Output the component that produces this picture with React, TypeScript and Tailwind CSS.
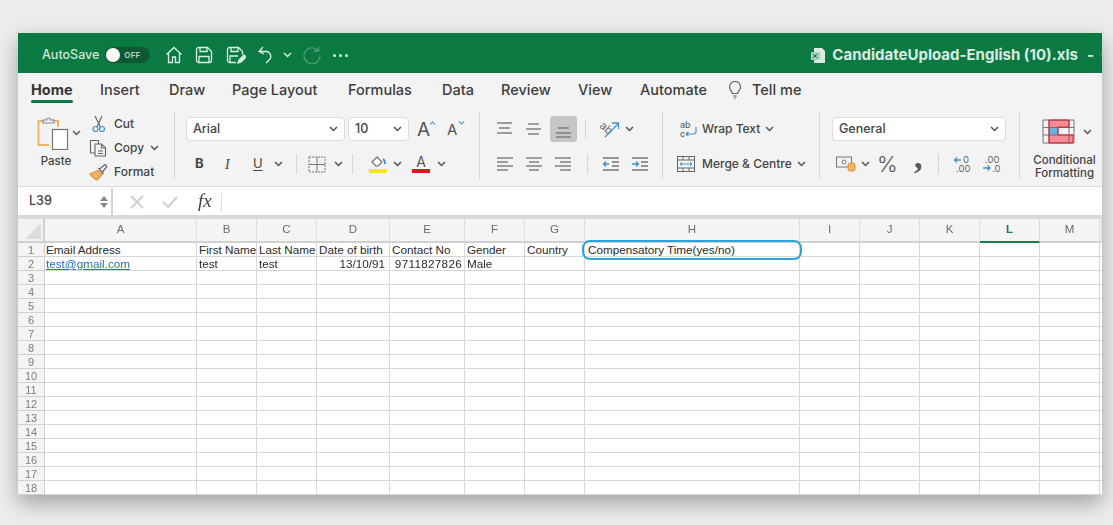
const columns = ['A', 'B', 'C', 'D', 'E', 'F', 'G', 'H', 'I', 'J', 'K', 'L', 'M', '']

const headerRow = ['Email Address', 'First Name', 'Last Name', 'Date of birth', 'Contact No', 'Gender', 'Country', 'Compensatory Time(yes/no)']
const tabs = [
  { label: 'Home', width: 'w-[69px]' },
  { label: 'Insert', width: 'w-[69px]' },
  { label: 'Draw', width: 'w-[63px]' },
  { label: 'Page Layout', width: 'w-[116px]' },
  { label: 'Formulas', width: 'w-[94px]' },
  { label: 'Data', width: 'w-[59px]' },
  { label: 'Review', width: 'w-[77px]' },
  { label: 'View', width: 'w-[62px]' },
  { label: 'Automate', width: 'w-[88px]' },
]

const gridCols = 'grid-cols-[27px_152px_60px_60px_73px_75px_60px_60px_215px_60px_60px_60px_60px_60px_2px]'

function Chevron({ className = '' }: { className?: string }) {
  return (
    <svg viewBox="0 0 9 6" className={`h-[6px] w-[9px] shrink-0 ${className}`} fill="none" stroke="#555" strokeWidth="1.5">
      <path d="M1 1l3.5 3.5L8 1" />
    </svg>
  )
}

function Sep({ className = '' }: { className?: string }) {
  return <div className={`h-[20px] w-px shrink-0 bg-[#d4d4d4] ${className}`} />
}

function Lines({ rows, className = '' }: { rows: [number, number, number][]; className?: string }) {
  return (
    <svg viewBox="0 0 18 16" className={`h-[16px] w-[18px] shrink-0 ${className}`} stroke="#777" strokeWidth="1.4">
      {rows.map(([x1, x2, y]) => (
        <line key={`${x1}-${y}`} x1={x1} x2={x2} y1={y} y2={y} />
      ))}
    </svg>
  )
}

function TopBarIcons() {
  return (
    <div className="ml-[15px] flex shrink-0 items-center">
      <svg viewBox="0 0 18 18" className="h-[18px] w-[18px]" fill="none" stroke="#d9efe2" strokeWidth="1.3">
        <path d="M1.500 8.500L9 1.500l7.500 7M3.500 7v9.500h4V11h3v5.500h4V7" />
      </svg>
      <svg viewBox="0 0 18 18" className="ml-[12px] h-[18px] w-[18px]" fill="none" stroke="#d9efe2" strokeWidth="1.3">
        <path d="M1.500 3.500a2 2 0 0 1 2-2h9l4 4v9a2 2 0 0 1-2 2h-11a2 2 0 0 1-2-2z" />
        <path d="M5 1.500v4h7v-4M4 16.500v-6h10v6" />
      </svg>
      <svg viewBox="0 0 20 18" className="ml-[13px] h-[18px] w-[20px]" fill="none" stroke="#d9efe2" strokeWidth="1.3">
        <path d="M10 16.500H3.500a2 2 0 0 1-2-2v-11a2 2 0 0 1 2-2h9l4 4v3" />
        <path d="M5 1.500v4h7v-4M4 16v-6h8" />
        <path d="M12 17l1-3 5-5 2 2-5 5z" fill="#d9efe2" />
      </svg>
      <svg viewBox="0 0 16 18" className="ml-[12px] h-[18px] w-[16px]" fill="none" stroke="#d9efe2" strokeWidth="1.3">
        <path d="M5 1L1 5.500 6 8M1.500 5.500h7.500a5 5 0 0 1 3 7.500l-4 4" />
      </svg>
      <Chevron className="ml-[9px] [&_path]:stroke-[#d9efe2]" />
      <svg viewBox="0 0 20 20" className="ml-[10px] h-[20px] w-[20px]" fill="none" stroke="#4d9f75" strokeWidth="1.3">
        <path d="M16 5.500A8 8 0 1 0 18 10M16.500 1.500v4.500H12" />
      </svg>
      <div className="ml-[11px] flex gap-[3px]">
        <span className="h-[3px] w-[3px] rounded-full bg-[#d9efe2]" />
        <span className="h-[3px] w-[3px] rounded-full bg-[#d9efe2]" />
        <span className="h-[3px] w-[3px] rounded-full bg-[#d9efe2]" />
      </div>
    </div>
  )
}

function TitleBar() {
  return (
    <div className="flex h-[40px] items-center overflow-hidden bg-[#0a7a42] pt-[4px]">
      <span className="ml-[24px] shrink-0 text-[12.5px] font-medium text-[#cfe6d8]">AutoSave</span>
      <div className="ml-[6px] flex h-[16px] w-[45px] shrink-0 items-center rounded-full bg-[#0c5a33] pl-px">
        <span className="h-[14px] w-[14px] rounded-full bg-white" />
        <span className="ml-[4px] text-[8px] font-semibold tracking-wide text-[#bcd9c8]">OFF</span>
      </div>
      <TopBarIcons />
      <svg viewBox="0 0 16 17" className="ml-[462px] h-[17px] w-[16px] shrink-0">
        <path d="M4 1h8l3 3v12H4z" fill="#dcebe2" />
        <rect x="1" y="5" width="9" height="8" fill="#a9cdb8" />
        <path d="M3 7l4 4M7 7l-4 4" stroke="#0a7a42" />
      </svg>
      <span className="ml-[6px] shrink-0 whitespace-nowrap text-[15px] font-bold text-[#dcebe2]">CandidateUpload-English (10).xls</span>
      <span className="ml-[9px] shrink-0 text-[15px] font-bold text-[#dcebe2]">-</span>
      <span className="ml-[7px] shrink-0 text-[15px] font-bold text-[#dcebe2]">C</span>
    </div>
  )
}

function Tabs() {
  return (
    <div className="flex h-[37px] items-center pb-[4px] pl-[13px] text-[14.5px] font-medium text-[#3d3d3d]">
      {tabs.map((tab) => (
        <div key={tab.label} className={`relative ${tab.width}`}>
          <span className={tab.label === 'Home' ? 'font-bold text-[#333]' : ''}>{tab.label}</span>
          {tab.label === 'Home' && <div className="absolute -bottom-[3px] left-0 h-[3px] w-[42px] rounded-full bg-[#0a7a42]" />}
        </div>
      ))}
      <svg viewBox="0 0 14 18" className="h-[18px] w-[14px]" fill="none" stroke="#666" strokeWidth="1.2">
        <path d="M4.500 12.500C4 10 1.500 9 1.500 6a5.500 5.500 0 0 1 11 0c0 3-2.500 4-3 6.500zM5 15h4M6 17h2" />
      </svg>
      <span className="ml-[10px]">Tell me</span>
    </div>
  )
}

function ClipboardGroup() {
  return (
    <div className="flex h-[68px] w-[157px] shrink-0 border-r border-[#d4d4d4] pl-[19px] pt-[5px]">
      <div className="w-[48px] shrink-0">
        <div className="flex items-center">
          <svg viewBox="0 0 32 34" className="h-[34px] w-[32px] shrink-0" fill="none">
            <path d="M7 5H1.500v24H12" stroke="#efb565" strokeWidth="2" />
            <path d="M16 5h5v6" stroke="#efb565" strokeWidth="2" />
            <path d="M6 7V4h3.500a2 2 0 0 1 4 0H17v3z" stroke="#888" strokeWidth="1.200" fill="#f3f3f3" />
            <rect x="15.500" y="13.500" width="15" height="20" fill="#fff" stroke="#777" strokeWidth="1.200" />
          </svg>
          <Chevron className="ml-[3px]" />
        </div>
        <div className="mt-[3px] w-[38px] text-center text-[11.5px] font-medium text-[#444]">Paste</div>
      </div>
      <div className="-mt-px ml-[6px] flex flex-col gap-[7px] text-[12px] font-medium text-[#444]">
        <div className="flex h-[17px] items-center">
          <svg viewBox="0 0 16 18" className="h-[18px] w-[16px]" fill="none" strokeWidth="1.200">
            <path d="M4 1l5.500 11M11 1L6 12" stroke="#666" />
            <circle cx="4.500" cy="14" r="2.500" stroke="#3f92cc" />
            <circle cx="11" cy="14" r="2.500" stroke="#3f92cc" />
          </svg>
          <span className="ml-[7px]">Cut</span>
        </div>
        <div className="flex h-[17px] items-center">
          <svg viewBox="0 0 20 18" className="-ml-[2px] h-[18px] w-[20px]" fill="none" stroke="#666" strokeWidth="1.100">
            <path d="M6 14H1.500V1.500h8V5" />
            <path d="M6 5h6.500l4 4v8H6z" />
            <path d="M12.500 5v4h4M9 12h5M9 14.500h5" />
          </svg>
          <span className="ml-[5px]">Copy</span>
          <Chevron className="ml-[6px]" />
        </div>
        <div className="flex h-[17px] items-center">
          <svg viewBox="0 0 20 18" className="-ml-[2px] h-[18px] w-[20px]" fill="none" strokeWidth="1.200">
            <path d="M1 11l8-3.500 4 4-5 5.500C5 16 3 14 1 11z" fill="#f2b36a" stroke="#e39338" />
            <path d="M10 6.500l6-5 2 2-5 6M9.500 5l5 6" stroke="#666" />
          </svg>
          <span className="ml-[5px]">Format</span>
        </div>
      </div>
    </div>
  )
}

function Select({ value, width, pad = 'pl-[6px]' }: { value: string; width: string; pad?: string }) {
  return (
    <div className={`flex h-[24px] shrink-0 items-center justify-between rounded-[4px] border border-[#dcdcdc] bg-white pr-[6px] text-[12.5px] font-medium text-[#444] ${width} ${pad}`}>
      <span>{value}</span>
      <Chevron />
    </div>
  )
}

function FontGroup() {
  return (
    <div className="flex h-[68px] w-[305px] shrink-0 flex-col border-r border-[#d4d4d4] pl-[11px] pt-[6px]">
      <div className="flex h-[24px] items-center">
        <Select value="Arial" width="w-[159px]" />
        <Select value="10" width="w-[61px]" pad="pl-[6px] ml-[3px]" />
        <span className="relative ml-[8px] w-[18px] text-[19px] leading-none text-[#555]">
          A
          <svg viewBox="0 0 7 4" className="absolute -right-[1px] top-[1px] h-[4px] w-[7px]" fill="none" stroke="#5aa5d8" strokeWidth="1.200">
            <path d="M1 3.500L3.500 1 6 3.500" />
          </svg>
        </span>
        <span className="relative ml-[12px] w-[18px] text-[15px] leading-none text-[#555]">
          A
          <svg viewBox="0 0 7 4" className="absolute right-0 -top-[1px] h-[4px] w-[7px]" fill="none" stroke="#5aa5d8" strokeWidth="1.200">
            <path d="M1 .5L3.500 3 6 .5" />
          </svg>
        </span>
      </div>
      <div className="mt-[11px] flex h-[24px] items-center text-[#444]">
        <span className="ml-[9px] w-[10px] text-[13px] font-bold">B</span>
        <span className="ml-[20px] w-[8px] font-['Liberation_Serif',serif] text-[14px] italic">I</span>
        <span className="ml-[20px] w-[12px] text-[13px] underline underline-offset-2">U</span>
        <Chevron className="ml-[9px]" />
        <Sep className="ml-[13px]" />
        <svg viewBox="0 0 18 17" className="ml-[11px] h-[17px] w-[18px]" fill="none" stroke="#777" strokeWidth="1">
          <rect x="1" y="1" width="16" height="15" strokeDasharray="2 1" />
          <path d="M9 1v15M1 8.500h16" />
        </svg>
        <Chevron className="ml-[8px]" />
        <Sep className="ml-[9px]" />
        <div className="ml-[16px] flex w-[18px] flex-col items-center">
          <svg viewBox="0 0 18 13" className="h-[13px] w-[18px]" fill="none" stroke="#666" strokeWidth="1.100">
            <path d="M3 7l5-5 5 5-4 4H7z" fill="#fff" />
            <path d="M14 4c2 1 2 3 2 5" stroke="#3f92cc" strokeWidth="1.800" />
          </svg>
          <div className="mt-[1px] h-[4px] w-[18px] bg-[#f5e61e]" />
        </div>
        <Chevron className="ml-[6px]" />
        <div className="ml-[10px] flex w-[18px] flex-col items-center">
          <span className="text-[14px] leading-[13px] text-[#555]">A</span>
          <div className="mt-[1px] h-[4px] w-[18px] bg-[#e0141c]" />
        </div>
        <Chevron className="ml-[7px]" />
      </div>
    </div>
  )
}

function AlignGroup() {
  return (
    <div className="flex h-[68px] w-[183px] shrink-0 flex-col border-r border-[#d4d4d4] pl-[16px] pt-[5px]">
      <div className="flex h-[26px] items-center">
        <Lines rows={[[1, 16, 2], [3, 14, 7], [1, 16, 12]]} />
        <Lines className="ml-[11px]" rows={[[3, 14, 3], [1, 16, 8], [3, 14, 13]]} />
        <div className="ml-[7px] flex h-[26px] w-[27px] items-end justify-center rounded-[3px] bg-[#c6c6c6] pb-[3px]">
          <Lines rows={[[3, 14, 5], [1, 16, 10], [1, 16, 14]]} />
        </div>
        <Sep className="ml-[8px]" />
        <svg viewBox="0 0 22 20" className="ml-[13px] h-[20px] w-[22px] overflow-visible" fill="none">
          <text x="1" y="11" fontSize="11" fill="#666" transform="rotate(40 5 8)">ab</text>
          <path d="M6 18L19 5M13 4h6.500v6" stroke="#3f92cc" strokeWidth="1.300" />
        </svg>
        <Chevron className="ml-[4px]" />
      </div>
      <div className="mt-[11px] flex h-[22px] items-center">
        <Lines rows={[[1, 17, 2], [1, 12, 6], [1, 17, 10], [1, 12, 14]]} />
        <Lines className="ml-[11px]" rows={[[1, 17, 2], [4, 14, 6], [1, 17, 10], [4, 14, 14]]} />
        <Lines className="ml-[11px]" rows={[[1, 17, 2], [6, 17, 6], [1, 17, 10], [6, 17, 14]]} />
        <Sep className="ml-[15px]" />
        <svg viewBox="0 0 18 16" className="ml-[14px] h-[16px] w-[18px]" fill="none" stroke="#777" strokeWidth="1.300">
          <path d="M1 2h16M10 6h7M10 10h7M1 14h16" />
          <path d="M7 8H1.500M4 5.500L1.500 8 4 10.500" stroke="#3f92cc" />
        </svg>
        <svg viewBox="0 0 18 16" className="ml-[11px] h-[16px] w-[18px]" fill="none" stroke="#777" strokeWidth="1.300">
          <path d="M1 2h16M10 6h7M10 10h7M1 14h16" />
          <path d="M1 8h6.500M5 5.500L7.500 8 5 10.500" stroke="#3f92cc" />
        </svg>
      </div>
    </div>
  )
}

function WrapGroup() {
  return (
    <div className="flex h-[68px] w-[157px] shrink-0 flex-col border-r border-[#d4d4d4] pl-[14px] pt-[6px] text-[12px] font-medium text-[#444]">
      <div className="flex h-[24px] items-center">
        <svg viewBox="0 0 18 18" className="ml-[3px] h-[18px] w-[18px]" fill="none">
          <text x="0" y="8" fontSize="9" fill="#666">ab</text>
          <text x="0" y="17" fontSize="9" fill="#666">c</text>
          <path d="M6 14h7a3 3 0 0 0 3-4V7M6 14l2.500-2M6 14l2.500 2" stroke="#3f92cc" strokeWidth="1.200" />
        </svg>
        <span className="ml-[4px]">Wrap Text</span>
        <Chevron className="ml-[5px]" />
      </div>
      <div className="mt-[11px] flex h-[24px] items-center">
        <svg viewBox="0 0 18 16" className="h-[16px] w-[18px]" fill="none" stroke="#666" strokeWidth="1">
          <rect x="0.500" y="0.500" width="17" height="15" />
          <path d="M0.500 4h17M0.500 12h17M6 0.500V4M12 0.500V4M6 12v3.500M12 12v3.500" />
          <path d="M3 8h12M5 6L3 8l2 2M13 6l2 2-2 2" stroke="#3f92cc" />
        </svg>
        <span className="ml-[7px]">Merge &amp; Centre</span>
        <Chevron className="ml-[5px]" />
      </div>
    </div>
  )
}

function NumberGroup() {
  return (
    <div className="flex h-[68px] w-[200px] shrink-0 flex-col border-r border-[#d4d4d4] pl-[12px] pt-[6px]">
      <Select value="General" width="w-[174px]" />
      <div className="mt-[11px] flex h-[24px] items-center text-[#555]">
        <svg viewBox="0 0 20 16" className="ml-[4px] h-[16px] w-[20px]" fill="none">
          <rect x="0.500" y="1" width="15" height="10" stroke="#777" />
          <circle cx="8" cy="6" r="2" stroke="#777" />
          <rect x="12" y="7" width="7" height="8" rx="2" fill="#f2b36a" stroke="#e39338" />
        </svg>
        <Chevron className="ml-[5px]" />
        <span className="ml-[7px] w-[24px] text-[22px] font-light leading-none">%</span>
        <span className="-mt-[14px] ml-[13px] w-[10px] font-['Liberation_Serif',serif] text-[34px] font-bold leading-[20px]">,</span>
        <Sep className="ml-[14px]" />
        <svg viewBox="0 0 20 18" className="ml-[14px] h-[18px] w-[20px] overflow-visible" fill="none">
          <path d="M8 5H1.500M4 2.500L1.500 5 4 7.500" stroke="#3f92cc" strokeWidth="1.300" />
          <text x="10" y="8" fontSize="9.500" fill="#666">0</text>
          <text x="3" y="17" fontSize="9.500" fill="#666">.00</text>
        </svg>
        <svg viewBox="0 0 20 18" className="ml-[9px] h-[18px] w-[20px] overflow-visible" fill="none">
          <text x="3" y="8" fontSize="9.500" fill="#666">.00</text>
          <path d="M1 13h7M5.500 10.500L8 13l-2.500 2.500" stroke="#3f92cc" strokeWidth="1.300" />
          <text x="10" y="17" fontSize="9.500" fill="#666">.0</text>
        </svg>
      </div>
    </div>
  )
}

function ConditionalGroup() {
  return (
    <div className="flex h-[68px] flex-1 flex-col overflow-hidden pt-[8px] text-[11.5px] font-medium leading-[13px] text-[#444]">
      <div className="flex h-[25px] items-center pl-[22px]">
        <svg viewBox="0 0 33 25" className="h-[25px] w-[33px]" fill="none">
          <rect x="7" y="1" width="20" height="7" fill="#f48b95" />
          <rect x="7" y="16" width="24" height="8" fill="#f48b95" />
          <rect x="7" y="9" width="9" height="7" fill="#6fb0e2" />
          <path d="M1 1h31v23H1zM1 8.500h31M1 16h31M7 1v23M16 8v8M27 1v23" stroke="#666" strokeWidth="0.900" />
          <path d="M7 1h20v7H16v8h15v8H7z" stroke="#d8222c" strokeWidth="1" />
        </svg>
        <Chevron className="ml-[8px]" />
      </div>
      <div className="mt-[10px] w-[92px] pr-[3px] text-center">
        <div>Conditional</div>
        <div>Formatting</div>
      </div>
    </div>
  )
}

function FormulaBar() {
  return (
    <div className="flex h-[28px] items-stretch bg-white pt-px">
      <div className="ml-px flex w-[94px] items-center justify-between border-r-2 border-[#d4d4d4] pl-[10px] pr-[3px] text-[12.5px] font-medium text-[#444]">
        <span>L39</span>
        <div className="flex flex-col gap-[2px]">
          <div className="h-0 w-0 border-x-[4px] border-b-[5px] border-x-transparent border-b-[#888]" />
          <div className="h-0 w-0 border-x-[4px] border-t-[5px] border-x-transparent border-t-[#888]" />
        </div>
      </div>
      <div className="flex items-center">
        <svg viewBox="0 0 14 14" className="ml-[17px] h-[14px] w-[14px]" stroke="#cfcfcf" strokeWidth="2">
          <path d="M1 1l12 12M13 1L1 13" />
        </svg>
        <svg viewBox="0 0 16 14" className="ml-[18px] h-[14px] w-[16px]" fill="none" stroke="#cfcfcf" strokeWidth="2">
          <path d="M1 7l5 5 9-10" />
        </svg>
        <span className="ml-[20px] w-[18px] font-['Liberation_Serif',serif] text-[19px] italic text-[#444]">fx</span>
        <div className="ml-[5px] h-[18px] w-px bg-[#dcdcdc]" />
      </div>
    </div>
  )
}

function Sheet() {
  const cell = 'h-[14px] border-b border-r border-[#d8d8d8] bg-white px-[2px] text-[11.7px] leading-[13px] whitespace-nowrap'
  const rowHead = 'h-[14px] border-b border-r border-[#cfcfcf] bg-[#f4f4f4] text-center text-[11px] font-medium leading-[14px] text-[#7c7c7c]'
  const ink = 'text-[#2b2b2b]'

  return (
    <div className={`grid ${gridCols} font-['Liberation_Sans',sans-serif]`}>
      <div className="flex h-[24px] items-end justify-end border-b-2 border-r-2 border-[#d0d0d0] bg-[#f2f2f2] p-[2px]">
        <div className="h-0 w-0 border-b-[16px] border-l-[16px] border-b-[#dcdcdc] border-l-transparent" />
      </div>
      {columns.map((col) => (
        <div
          key={col || 'end'}
          className={`flex h-[24px] items-center justify-center border-b-2 border-r bg-[#f4f4f4] text-[11.5px] ${
            col === 'L' ? 'border-b-[#1d7a4b] border-r-[#d8d8d8] font-bold text-[#1d7a4b]' : 'border-b-[#d0d0d0] border-r-[#dedede] text-[#6b6b6b]'
          }`}
        >
          {col}
        </div>
      ))}

      {Array.from({ length: 18 }, (_, r) => (
        <div key={r} className="contents">
          <div className={rowHead}>{r + 1}</div>
          {columns.map((_, c) => {
            const key = `${r}-${c}`
            if (r === 0 && c < headerRow.length) {
              return (
                <div key={key} className={`${cell} ${ink} relative ${c === 0 ? 'pl-px' : ''} ${c === 7 ? 'pl-[3px]' : ''}`}>
                  {headerRow[c]}
                  {c === 7 && <div className="absolute -bottom-[4px] -left-[3px] -right-[3px] -top-[3px] rounded-[8px] border-2 border-[#2aa5dc]" />}
                </div>
              )
            }
            if (r === 1 && c === 0) return <div key={key} className={`${cell} pl-px text-[#2a6fc4] underline`}>test@gmail.com</div>
            if (r === 1 && (c === 1 || c === 2)) return <div key={key} className={`${cell} ${ink}`}>test</div>
            if (r === 1 && c === 3) return <div key={key} className={`${cell} ${ink} pr-[4px] text-right`}>13/10/91</div>
            if (r === 1 && c === 4) return <div key={key} className={`${cell} ${ink} text-right tracking-[0.3px]`}>9711827826</div>
            if (r === 1 && c === 5) return <div key={key} className={`${cell} ${ink}`}>Male</div>
            return <div key={key} className={cell} />
          })}
        </div>
      ))}
    </div>
  )
}

export default function App() {
  return (
    <div className="h-[525px] w-[1113px] overflow-hidden bg-[#ececec] pl-[18px] pt-[33px] font-['Inter',sans-serif]">
      <div className="w-[1084px] overflow-hidden bg-white shadow-[0_8px_20px_rgba(0,0,0,0.32)] blur-[0.4px]">
        <TitleBar />
        <div className="h-[114px] border-b border-[#dcdcdc] bg-[#f3f3f3]">
          <Tabs />
          <div className="flex pt-px">
            <ClipboardGroup />
            <FontGroup />
            <AlignGroup />
            <WrapGroup />
            <NumberGroup />
            <ConditionalGroup />
          </div>
        </div>
        <FormulaBar />
        <div className="h-[4px] bg-[#d9d9d9]" />
        <Sheet />
      </div>
    </div>
  )
}
